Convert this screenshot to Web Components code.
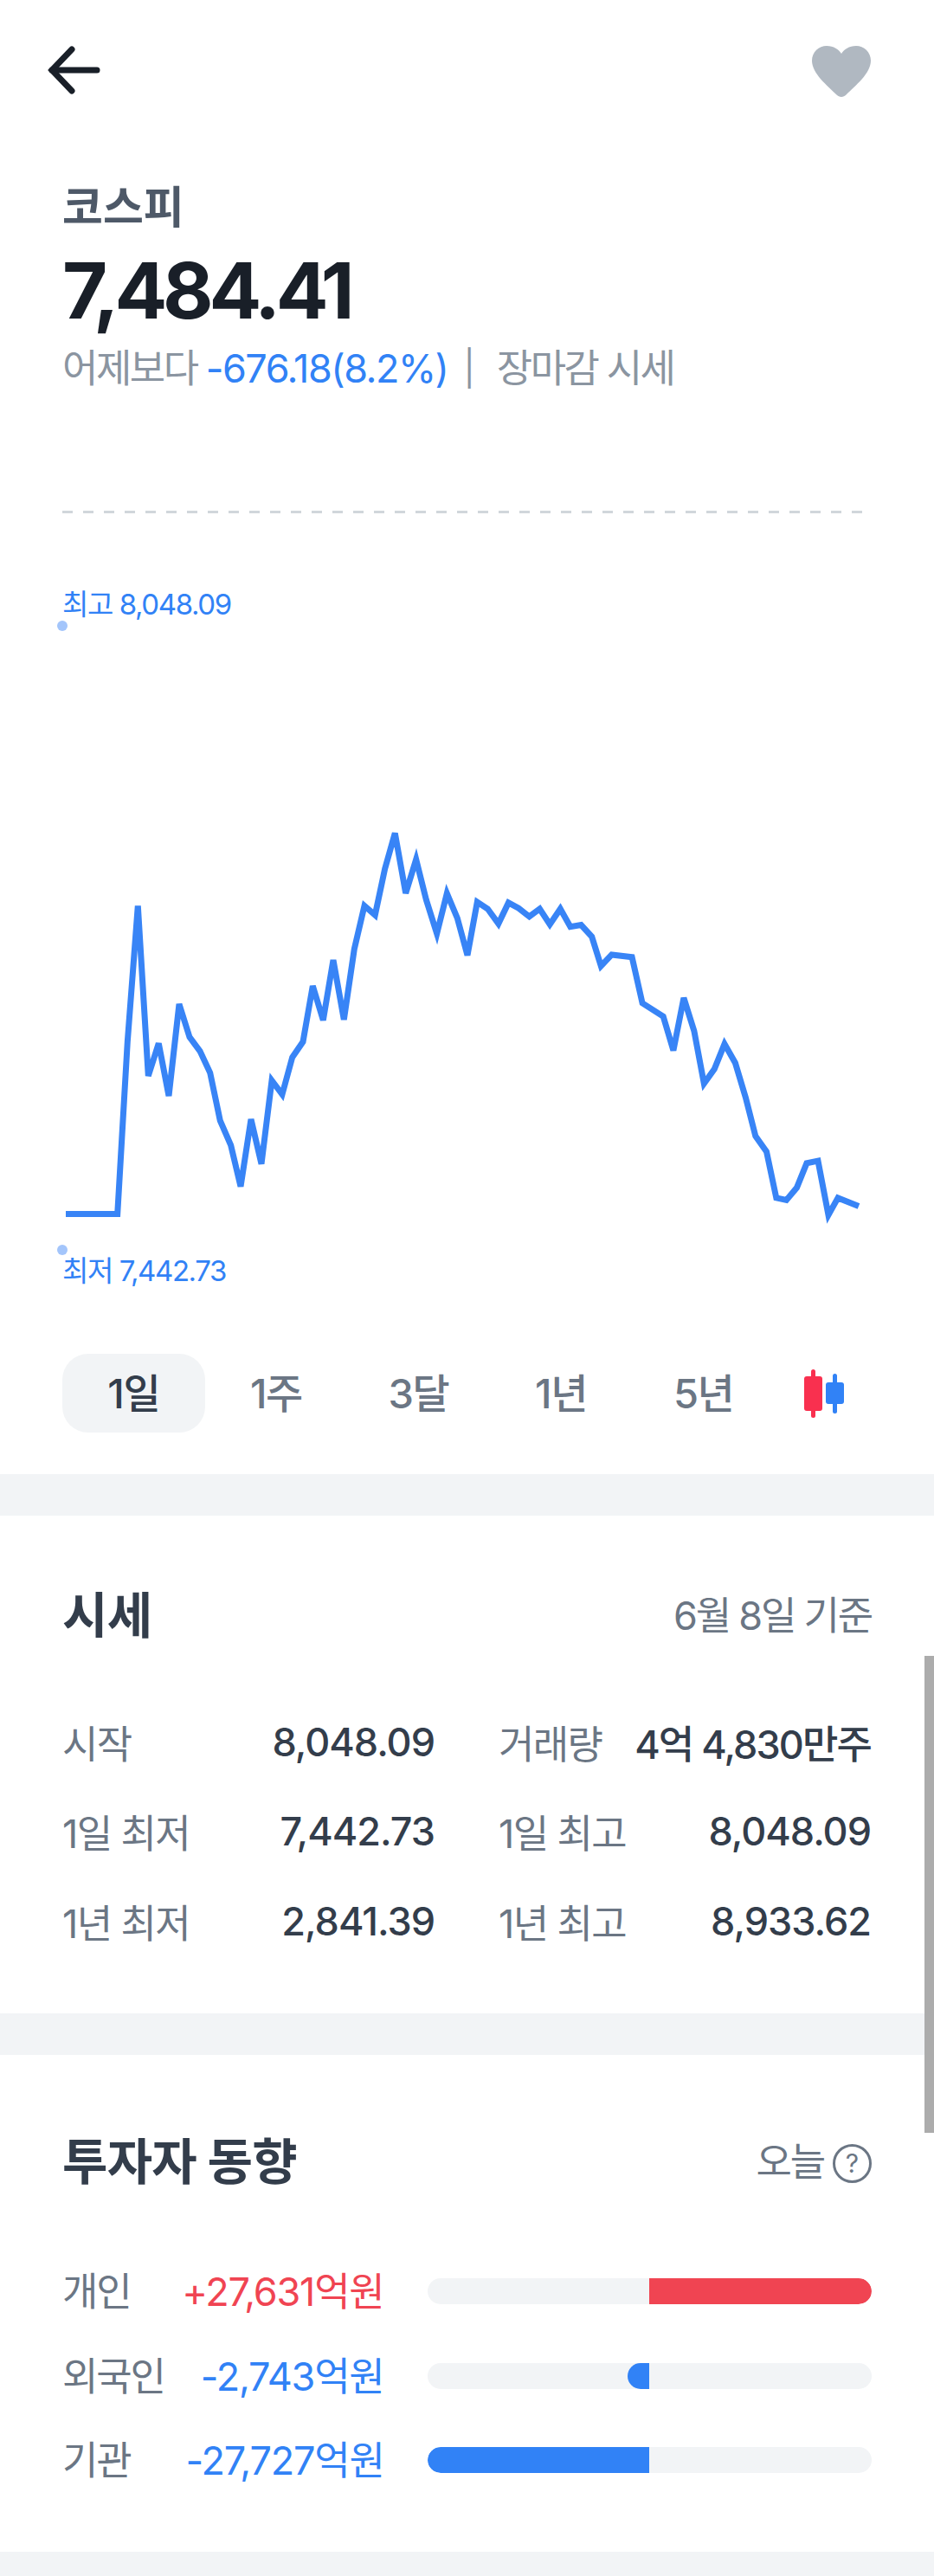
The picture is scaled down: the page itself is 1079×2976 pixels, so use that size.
<!DOCTYPE html>
<html lang="ko">
<head>
<meta charset="utf-8">
<title>코스피</title>
<style>
html, body { margin: 0; padding: 0; background: #fff; overflow: hidden; }
body {
    position: relative;
    height: 2976px;
    font-family: Inter, "Noto Sans CJK KR", sans-serif;
    color: #333d4b;
}
</style>
</head>
<body>
<stock-page>
    <top-bar></top-bar>
    <stock-summary name="코스피" price="7,484.41" change="-676.18(8.2%)" note="장마감 시세"></stock-summary>
    <stock-chart high="최고 8,048.09" low="최저 7,442.73"></stock-chart>
    <range-tabs></range-tabs>
    <section-gap></section-gap>
    <info-section heading="시세" aside="6월 8일 기준" style="--pad-top:76px;--head-gap:75px">
        <price-table>
            <price-cell label="시작">8,048.09</price-cell>
            <price-cell label="거래량" style="letter-spacing:-1.9px">4억 4,830만주</price-cell>
            <price-cell label="1일 최저">7,442.73</price-cell>
            <price-cell label="1일 최고">8,048.09</price-cell>
            <price-cell label="1년 최저">2,841.39</price-cell>
            <price-cell label="1년 최고">8,933.62</price-cell>
        </price-table>
    </info-section>
    <section-gap></section-gap>
    <info-section heading="투자자 동향" aside="오늘" help style="--pad-top:84px;--head-gap:79px">
        <investor-list>
            <investor-row label="개인" value="+27,631억원" side="buy" size="100"></investor-row>
            <investor-row label="외국인" value="-2,743억원" side="sell" size="9.7"></investor-row>
            <investor-row label="기관" value="-27,727억원" side="sell" size="100"></investor-row>
        </investor-list>
    </info-section>
    <section-gap></section-gap>
</stock-page>
<page-scrollbar></page-scrollbar>

<script>
// Small helper: every element gets an open shadow root from a string
const shadow = (el, html) => { el.attachShadow({ mode: 'open' }).innerHTML = html; };

customElements.define('stock-page', class extends HTMLElement {
    constructor() {
        super();
        shadow(this, `<style>:host { display: flex; flex-direction: column; }</style><slot></slot>`);
    }
});

customElements.define('top-bar', class extends HTMLElement {
    constructor() {
        super();
        shadow(this, `
        <style>
        :host { display: flex; justify-content: space-between; align-items: center; height: 160px; padding: 0 73px 0 54px; }
        svg { display: block; }
        .arrow { margin-top: 1px; }
        .heart { margin-top: 5px; }
        </style>
        <svg class="arrow" width="62" height="56" viewBox="0 0 62 56" fill="none" stroke="#191f28" stroke-width="7" stroke-linecap="round" stroke-linejoin="miter">
            <path d="M29 4 L6 28 L29 52"/>
            <path d="M6 28 H58"/>
        </svg>
        <svg class="heart" width="68" height="59" viewBox="0 0 68 59" fill="#b0b8c1">
            <path d="M34 59 C32 59 30 58 28.5 56.5 C18 46 0 32 0 17 C0 7 8 0 17 0 C25 0 31 4 34 9 C37 4 43 0 51 0 C60 0 68 7 68 17 C68 32 50 46 39.5 56.5 C38 58 36 59 34 59 Z"/>
        </svg>`);
    }
});

customElements.define('stock-summary', class extends HTMLElement {
    constructor() {
        super();
        const a = n => this.getAttribute(n);
        shadow(this, `
        <style>
        :host { display: block; padding: 44px 72px 0; height: 430px; box-sizing: border-box; }
        .name { font-size: 51px; line-height: 72px; font-weight: 600; color: #4e5968; letter-spacing: 0; }
        .price { font-size: 90px; line-height: 108px; font-weight: 700; color: #191f28; margin-top: 6px; letter-spacing: -5.3px; }
        .sub { display: flex; align-items: center; font-size: 45px; line-height: 66px; color: #8b95a1; margin-top: 3px; white-space: pre; letter-spacing: -2.5px; }
        .chg { color: #3182f6; letter-spacing: -1.5px; }
        .bar { margin: 0 25px 0 18px; font-size: 40px; letter-spacing: 0; }
        </style>
        <div class="name">${a('name')}</div>
        <div class="price">${a('price')}</div>
        <div class="sub"><span>어제보다 </span><span class="chg">${a('change')}</span><span class="bar">|</span><span>${a('note')}</span></div>`);
    }
});

// Line chart, the points are in page pixels minus the chart's own top
const LINE = [[76,1402.5],[135.7,1402.5],[147.3,1203.6],[159.3,1046.4],[171.3,1243],[183.3,1205.4],[195,1266],[207,1160],
    [219,1198.2],[231,1214.3],[242.7,1239.3],[254.3,1294.6],[266.7,1323.2],[278,1370.7],[290,1293],[302,1344.6],
    [314,1248.2],[326,1264.3],[337.7,1221.4],[350,1203.6],[361.3,1139],[373.3,1178.6],[385,1109],[397.3,1177.9],
    [409.3,1096.4],[421,1046.4],[433.3,1057.1],[444.7,1003.6],[456.3,962.5],[468.7,1032],[480.7,992.9],[492.3,1039.3],
    [504.7,1078.6],[516.3,1032.1],[528.3,1060.7],[540,1103.6],[551.3,1042.1],[563.4,1050],[575.8,1067.1],[587.4,1042.9],
    [599.1,1049.3],[611.5,1058.9],[623.5,1050],[635.2,1067.9],[647.3,1050],[658.9,1070.7],[671.3,1068.6],[683.7,1082.1],
    [694.3,1116],[706.7,1102.9],[730.1,1105.7],[742.1,1158.9],[766.2,1174.3],[777.9,1213.6],[789.9,1152.9],[801.9,1191.1],
    [813.3,1251.8],[825.3,1235],[837,1206.1],[849.4,1227.9],[861.4,1267.9],[872.8,1312.5],[885.5,1330.4],[896.8,1383.9],
    [908.5,1386.4],[920.5,1372.1],[931.9,1343.9],[945,1341.1],[957,1403.6],[968,1383.9],[992,1393.6]];

customElements.define('stock-chart', class extends HTMLElement {
    constructor() {
        super();
        const top = 590;
        const pts = LINE.map(p => `${p[0]},${(p[1] - top).toFixed(1)}`).join(' ');
        shadow(this, `
        <style>
        :host { display: block; position: relative; height: 974px; color: #3182f6; font-size: 33px; }
        svg { position: absolute; left: 0; top: 0; }
        .lab { position: absolute; left: 72px; line-height: 40px; letter-spacing: -1.4px; white-space: pre; }
        .dot { position: absolute; left: 66px; width: 12px; height: 12px; border-radius: 50%; background: #a3c5fb; }
        </style>
        <svg width="1079" height="974" viewBox="0 0 1079 974" fill="none">
            <line x1="72" y1="1.5" x2="998" y2="1.5" stroke="#d1d6db" stroke-width="3" stroke-dasharray="12 12"/>
            <polyline points="${pts}" stroke="#3884f6" stroke-width="7" stroke-linejoin="miter"/>
        </svg>
        <div class="lab" style="top:88px">${this.getAttribute('high')}</div>
        <div class="dot" style="top:127px"></div>
        <div class="dot" style="top:848px"></div>
        <div class="lab" style="top:858px">${this.getAttribute('low')}</div>`);
    }
});

customElements.define('range-tabs', class extends HTMLElement {
    constructor() {
        super();
        const tabs = ['1일', '1주', '3달', '1년', '5년'];
        shadow(this, `
        <style>
        :host { display: flex; align-items: center; padding: 0 72px; height: 91px; margin-bottom: 48px; }
        .tab { width: 164.6px; height: 91px; box-sizing: border-box; padding-bottom: 6px; display: flex; align-items: center; justify-content: center; font-size: 47px; font-weight: 500; color: #6b7684; border-radius: 30px; letter-spacing: -1.4px; }
        .tab.on { background: #f2f4f6; color: #333d4b; }
        svg { margin-left: 34px; display: block; }
        </style>
        ${tabs.map((t, i) => `<div class="tab${i ? '' : ' on'}">${t}</div>`).join('')}
        <svg width="47" height="56" viewBox="0 0 47 56">
            <rect x="8" y="0" width="5" height="56" rx="2.5" fill="#f9304f"/>
            <rect x="0" y="8" width="21" height="40" rx="3" fill="#f9304f"/>
            <rect x="33" y="5" width="5" height="46" rx="2.5" fill="#3182f6"/>
            <rect x="25" y="15" width="21" height="25" rx="3" fill="#3182f6"/>
        </svg>`);
    }
});

customElements.define('section-gap', class extends HTMLElement {
    constructor() {
        super();
        shadow(this, `<style>:host { display: block; height: 48px; flex: none; background: #f2f4f6; }</style>`);
    }
});

customElements.define('info-section', class extends HTMLElement {
    constructor() {
        super();
        const help = this.hasAttribute('help') ? '<span class="q">?</span>' : '';
        shadow(this, `
        <style>
        :host { display: block; padding: var(--pad-top) 72px 0; }
        .head { display: flex; justify-content: space-between; align-items: center; height: 80px; margin-bottom: var(--head-gap); }
        h2 { margin: 0; font-size: 57px; font-weight: 700; line-height: 80px; color: #333d4b; letter-spacing: -0.8px; }
        .aside { display: flex; align-items: center; gap: 10px; font-size: 45px; line-height: 60px; color: #6b7684; letter-spacing: -2.2px; }
        .q { display: flex; align-items: center; justify-content: center; box-sizing: border-box; width: 45px; height: 45px; margin-top: 2px; border: 3px solid #6b7684; border-radius: 50%; font-size: 30px; line-height: 1; letter-spacing: 0; }
        </style>
        <div class="head"><h2>${this.getAttribute('heading')}</h2><div class="aside">${this.getAttribute('aside')}${help}</div></div>
        <slot></slot>`);
    }
});

customElements.define('price-table', class extends HTMLElement {
    constructor() {
        super();
        shadow(this, `
        <style>
        :host { display: grid; grid-template-columns: 430px 430px; column-gap: 74px; row-gap: 43.5px; padding-bottom: 77px; }
        </style>
        <slot></slot>`);
    }
});

customElements.define('price-cell', class extends HTMLElement {
    constructor() {
        super();
        shadow(this, `
        <style>
        :host { display: flex; justify-content: space-between; align-items: center; height: 60px; font-size: 45px; white-space: nowrap; letter-spacing: -1px; }
        .k { color: #6b7684; letter-spacing: -1.6px; }
        .v { color: #333d4b; font-weight: 500; }
        </style>
        <span class="k">${this.getAttribute('label')}</span><span class="v"><slot></slot></span>`);
    }
});

customElements.define('investor-list', class extends HTMLElement {
    constructor() {
        super();
        shadow(this, `
        <style>:host { display: flex; flex-direction: column; gap: 37.5px; padding-bottom: 76px; }</style>
        <slot></slot>`);
    }
});

customElements.define('investor-row', class extends HTMLElement {
    constructor() {
        super();
        const buy = this.getAttribute('side') === 'buy';
        const size = this.getAttribute('size');
        shadow(this, `
        <style>
        :host { display: flex; align-items: center; height: 60px; font-size: 45px; letter-spacing: -1.2px; white-space: nowrap; }
        .k { width: 120px; margin-bottom: 5px; color: #6b7684; letter-spacing: -2.2px; }
        .v { width: 252px; margin-bottom: 5px; text-align: right; color: ${buy ? '#f04452' : '#3182f6'}; }
        .track { display: flex; width: 514px; height: 30px; margin-left: 50px; background: #f2f4f6; border-radius: 15px; overflow: hidden; }
        .half { width: 50%; display: flex; }
        .half.l { justify-content: flex-end; }
        .fill { height: 100%; width: ${size}%; background: ${buy ? '#f04452' : '#3182f6'}; }
        .l .fill { border-radius: 15px 0 0 15px; }
        .r .fill { border-radius: 0 15px 15px 0; }
        </style>
        <span class="k">${this.getAttribute('label')}</span>
        <span class="v">${this.getAttribute('value')}</span>
        <div class="track">
            <div class="half l">${buy ? '' : '<div class="fill"></div>'}</div>
            <div class="half r">${buy ? '<div class="fill"></div>' : ''}</div>
        </div>`);
    }
});

// Overlay scrollbar thumb, lies over the page
customElements.define('page-scrollbar', class extends HTMLElement {
    constructor() {
        super();
        shadow(this, `<style>:host { position: absolute; right: 0; top: 1913px; width: 11px; height: 551px; background: #acacac; }</style>`);
    }
});
</script>
</body>
</html>
